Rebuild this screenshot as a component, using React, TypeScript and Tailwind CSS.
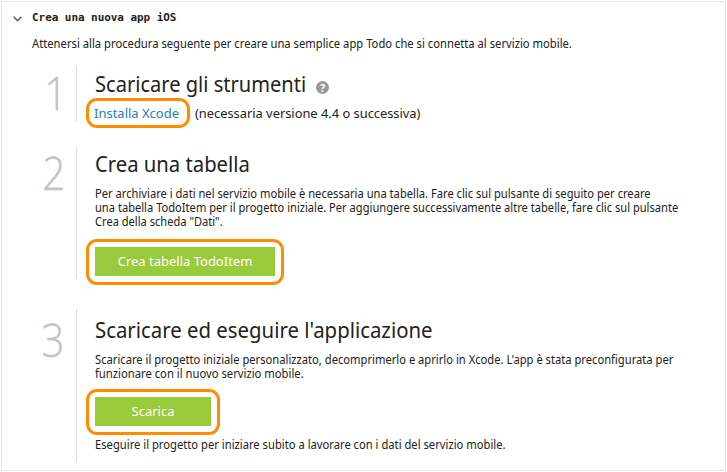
import type { ReactNode } from "react";

function Line({ children, className = "" }: { children: ReactNode; className?: string }) {
  return <span className={`block w-fit origin-left whitespace-nowrap ${className}`}>{children}</span>;
}

function Step({ n, className, numberClass, children }: { n: string; className: string; numberClass: string; children: ReactNode }) {
  return (
    <section className={`flex ${className}`}>
      <div
        className={`w-[75px] shrink-0 border-r border-[#dcdcdc] text-right font-['Open_Sans','Noto_Sans',sans-serif] text-[46px] leading-[48px] font-light text-[#c3c3c3] [-webkit-text-stroke:0.4px_#c3c3c3] ${numberClass}`}
      >
        <span className="inline-block origin-right scale-x-[0.88]">{n}</span>
      </div>
      <div className="pl-[9px]">{children}</div>
    </section>
  );
}

function Heading({ children, className = "" }: { children: ReactNode; className?: string }) {
  return (
    <h2 className={`ml-[9px] w-fit origin-left text-[21.5px] leading-[30px] font-normal whitespace-nowrap text-[#222] ${className}`}>
      {children}
    </h2>
  );
}

function Action({ children, className }: { children: ReactNode; className: string }) {
  return (
    <div className={`h-[46px] w-fit rounded-[11px] border-3 border-[#ff8c00] px-[6px] pt-[5px] ${className}`}>
      {children}
    </div>
  );
}

export default function App() {
  return (
    <div className="h-[472px] w-[727px] overflow-hidden bg-white pt-px pl-px font-['Noto_Sans','Open_Sans',sans-serif] text-[#222]">
      <main className="h-[470px] w-[725px] border border-[#e5e5e5]">
        <header className="flex h-[30px] items-center pl-[11px]">
          <svg width="9" height="6" viewBox="0 0 9 6" className="mt-[3px]" fill="none" stroke="#666" strokeWidth="1.6">
            <path d="M0.6 0.7 L4.5 4.6 L8.4 0.7" />
          </svg>
          <h1 className="mt-[2px] ml-[10px] font-['DejaVu_Sans_Mono',monospace] text-[11px] font-bold tracking-[-0.06px]">
            Crea una nuova app iOS
          </h1>
        </header>
        <p className="ml-[30px] h-[34px] pt-px text-[12px] leading-[22px]">
          <Line className="scale-x-[0.936]">Attenersi alla procedura seguente per creare una semplice app Todo che si connetta al servizio mobile.</Line>
        </p>

        <Step n="1" className="h-[55px]" numberClass="pt-[2px] pr-[9px]">
          <div className="flex h-[32px] items-center pt-[4px]">
            <Heading className="scale-x-[0.934]">Scaricare gli strumenti</Heading>
            <span className="mt-[6px] ml-[-5px] flex h-[13px] w-[13px] items-center justify-center rounded-full bg-[#999] text-[11px] leading-none font-bold text-white">
              ?
            </span>
          </div>
          <div className="flex items-center">
            <a className="flex h-[30px] w-[104px] items-center rounded-[11px] border-3 border-[#ff8c00] pt-px pl-[5px] text-[13.3px] whitespace-nowrap text-[#1b80b9]">
              <Line className="scale-x-[0.977]">Installa Xcode</Line>
            </a>
            <span className="ml-[5px] pt-[2px] text-[13.3px]">
              <Line className="scale-x-[0.966]">(necessaria versione 4.4 o successiva)</Line>
            </span>
          </div>
        </Step>

        <Step n="2" className="mt-[26px] h-[132px]" numberClass="pt-px pr-[11px]">
          <Heading className="scale-x-[0.942] pt-[2px]">Crea una tabella</Heading>
          <p className="mt-[8px] ml-[9px] text-[12px] leading-[14px]">
            <Line className="scale-x-[0.93]">Per archiviare i dati nel servizio mobile è necessaria una tabella. Fare clic sul pulsante di seguito per creare</Line>
            <Line className="scale-x-[0.927]">una tabella TodoItem per il progetto iniziale. Per aggiungere successivamente altre tabelle, fare clic sul pulsante</Line>
            <Line className="scale-x-[0.925]">Crea della scheda "Dati".</Line>
          </p>
          <Action className="mt-[10px]">
            <button className="h-[29px] w-[180px] bg-[#99ca3c] pt-px text-[13px] text-white">Crea tabella TodoItem</button>
          </Action>
        </Step>

        <Step n="3" className="mt-[30px] h-[153px]" numberClass="pt-[6px] pr-[12px]">
          <Heading className="scale-x-[0.947] pt-[6px]">Scaricare ed eseguire l'applicazione</Heading>
          <p className="mt-[8px] ml-[9px] text-[12px] leading-[14px]">
            <Line className="scale-x-[0.932]">Scaricare il progetto iniziale personalizzato, decomprimerlo e aprirlo in Xcode. L'app è stata preconfigurata per</Line>
            <Line className="scale-x-[0.937]">funzionare con il nuovo servizio mobile.</Line>
          </p>
          <Action className="mt-[8px]">
            <button className="h-[29px] w-[116px] bg-[#99ca3c] pt-px text-[13px] text-white">Scarica</button>
          </Action>
          <p className="mt-[3px] ml-[9px] text-[12px] leading-[14px]">
            <Line className="scale-x-[0.934]">Eseguire il progetto per iniziare subito a lavorare con i dati del servizio mobile.</Line>
          </p>
        </Step>
      </main>
    </div>
  );
}
